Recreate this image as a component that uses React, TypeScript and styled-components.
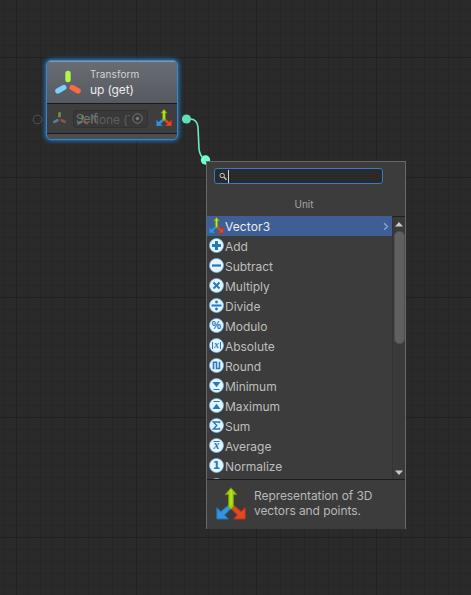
import React from "react";
import styled, { createGlobalStyle } from "styled-components";

const GlobalStyle = createGlobalStyle`
  * { box-sizing: border-box; }
  body { margin: 0; background: #2a2a2a; overflow: hidden; }
`;

const Canvas = styled.main`
  position: relative;
  width: 471px;
  height: 595px;
  overflow: hidden;
  font-family: Inter, "Liberation Sans", sans-serif;
  background-color: #2a2a2a;
  background-image:
    linear-gradient(90deg, #202020 1px, transparent 1px),
    linear-gradient(#202020 1px, transparent 1px),
    linear-gradient(90deg, #262626 1px, transparent 1px),
    linear-gradient(#262626 1px, transparent 1px);
  background-size: 120px 120px, 120px 120px, 12px 12px, 12px 12px;
  background-position: 16px 0, 0 57px, 4px 0, 0 9px;
`;

const Wires = styled.svg`
  position: absolute;
  left: 0;
  top: 0;
`;

const Node = styled.section`
  position: absolute;
  left: 46px;
  top: 60px;
  width: 132px;
  height: 80px;
  display: flex;
  flex-direction: column;
  border: 1.5px solid #3d83c8;
  border-radius: 5px;
  background: #4b4d4f;
  box-shadow: 0 0 4px 1px #2379c8;
  overflow: hidden;
`;

const NodeHeader = styled.header`
  height: 42px;
  flex: none;
  display: flex;
  align-items: center;
  gap: 7px;
  padding-left: 8px;
  border-top: 1px solid #92969b;
  background: linear-gradient(#686c73, #565a60);
`;

const NodeTitles = styled.div`
  display: flex;
  flex-direction: column;
  color: #ececec;
`;

const NodeType = styled.span`
  font-size: 10px;
  line-height: 14px;
  letter-spacing: 0.1px;
  color: #d4d4d4;
`;

const NodeName = styled.span`
  font-size: 12px;
  line-height: 18px;
  letter-spacing: -0.12px;
`;

const NodeBody = styled.div`
  height: 31px;
  flex: none;
  display: flex;
  align-items: center;
  padding: 0 5px 2px 6px;
  border-top: 1px solid #1b1b1b;
  border-bottom: 1px solid #1b1b1b;
  background: #3e3e3e;
`;

const Faded = styled.span`
  display: flex;
  flex: none;
  opacity: 0.45;
`;

const ObjectField = styled.div`
  position: relative;
  width: 75px;
  height: 18px;
  margin: 2px auto 0 6px;
  display: flex;
  align-items: center;
  justify-content: space-between;
  padding: 0 4px 0 3px;
  border: 1px solid #323232;
  border-radius: 3px;
  background: #393939;
  color: #5e5e5e;
  font-size: 12px;
`;

const FieldValue = styled.span`
  display: flex;
  align-items: center;
  gap: 1px;
  width: 53px;
  padding-top: 2px;
  overflow: hidden;
  white-space: nowrap;
  letter-spacing: -0.1px;
`;

const SelfLabel = styled.span`
  position: absolute;
  left: 2px;
  top: 0;
  font-size: 12px;
  line-height: 15px;
  letter-spacing: -0.1px;
  color: #777;
`;

const Menu = styled.section`
  position: absolute;
  left: 206px;
  top: 161px;
  width: 200px;
  height: 368px;
  display: flex;
  flex-direction: column;
  border: 1px solid #686868;
  border-bottom: 0;
  background: #3c3c3c;
  color: #c6c6c6;
`;

const MenuTop = styled.div`
  height: 54px;
  flex: none;
  padding: 6px 22px 0 7px;
`;

const Search = styled.div`
  width: 169px;
  height: 16px;
  display: flex;
  align-items: center;
  padding-left: 4px;
  border: 1px solid #387bc5;
  border-radius: 3px;
  background: #2a2a2a;
`;

const Caret = styled.i`
  width: 1px;
  height: 13px;
  background: #d8d8d8;
`;

const MenuTitle = styled.div`
  width: 180px;
  margin-top: 13px;
  text-align: center;
  font-size: 10px;
  line-height: 14px;
  color: #a5a5a5;
`;

const Scroller = styled.div`
  height: 263px;
  flex: none;
  display: flex;
  overflow: hidden;
`;

const List = styled.ul`
  width: 185px;
  margin: 0;
  padding: 0;
  list-style: none;
`;

const Row = styled.li<{ $selected?: boolean }>`
  height: 20px;
  display: flex;
  align-items: center;
  gap: 1px;
  padding: 1px 3px 0 2px;
  font-size: 12px;
  letter-spacing: ${(p) => (p.$selected ? "0.1px" : "-0.03px")};
  color: ${(p) => (p.$selected ? "#ececec" : "#bebebe")};
  background: ${(p) => (p.$selected ? "#3e5f96" : "transparent")};
  & > svg:first-child { flex: none; margin-top: -2px; }
`;

const RowLabel = styled.span`
  flex: 1;
`;

const Scrollbar = styled.div`
  width: 13px;
  display: flex;
  flex-direction: column;
  align-items: center;
  padding: 5px 0 4px;
  border-left: 1px solid #343434;
  border-top: 1px solid #202020;
  background: #3a3a3a;
`;

const Thumb = styled.div`
  width: 11px;
  height: 113px;
  margin-top: 4px;
  margin-bottom: auto;
  border: 1px solid #4e4e4e;
  border-radius: 5px;
  background: #606060;
`;

const Details = styled.footer`
  flex: 1;
  display: flex;
  align-items: flex-start;
  gap: 8px;
  padding: 7px 9px 0;
  border-top: 1px solid #1c1c1c;
  font-size: 12px;
  line-height: 15px;
  letter-spacing: -0.08px;
  white-space: pre-line;
  color: #b8b8b8;
`;

const DetailsText = styled.span`
  padding-top: 1px;
`;

const VectorIcon = ({ size, bold }: { size: number; bold?: boolean }) => {
  const outline = bold ? 1.4 : 1;
  return (
    <svg width={size} height={size * 1.1} viewBox="0 0 30 33">
      <path d="M12.600 18 15.600 21 8.600 28 12.400 32H.8V20.600l4 3.900Z" fill="#3295df" stroke="#2270b3" strokeWidth={outline} />
      <path d="M17.400 18 14.400 21 21.400 28 17.600 32h11.600V20.600l-4 3.900Z" fill="#e34824" stroke="#b8321a" strokeWidth={outline} />
      <path d="M15 .8 20.700 7.600h-3.200v12.200L15 22.300l-2.500-2.500V7.600H9.300Z" fill="#a2cf10" stroke="#759b00" strokeWidth={outline} />
      <path d="M15 3v15" stroke="#c3eb3d" strokeWidth={bold ? 2 : 1} />
    </svg>
  );
};

const TransformIcon = ({ size }: { size: number }) => (
  <svg width={size} height={size} viewBox="0 0 28 28" strokeLinecap="round" strokeWidth="5.4">
    <path d="M13 4.500v6" stroke="#b2f54b" />
    <path d="m8.800 18.500-5.900 3.400" stroke="#79cfff" />
    <path d="m17.200 18.500 5.900 3.400" stroke="#ff6a3d" />
  </svg>
);

const ink = "#2878ba";
const line = { fill: "none", stroke: ink, strokeWidth: 2 };
const glyphs: Record<string, React.ReactNode> = {
  Add: <path d="M7.5 3v9M3 7.5h9" {...line} strokeWidth={3} />,
  Subtract: <path d="M3 7.5h9" {...line} strokeWidth={2.2} />,
  Multiply: <path d="m4.5 4.5 6 6m0-6-6 6" {...line} />,
  Divide: <><path d="M2.5 7.5h10" {...line} /><circle cx="7.5" cy="4" r="1.4" fill={ink} /><circle cx="7.5" cy="11" r="1.4" fill={ink} /></>,
  Modulo: <text x="7.5" y="11.4" fontSize="10.5" fontWeight="700" fontFamily="Liberation Sans, sans-serif" textAnchor="middle" fill={ink}>%</text>,
  Absolute: <><path d="M3.5 4v7M11.5 4v7" {...line} strokeWidth={1} /><text x="7.5" y="10" fontFamily="Liberation Serif, serif" fontSize="10" fontWeight="700" fontStyle="italic" textAnchor="middle" fill={ink}>x</text></>,
  Round: <path d="M4.5 11.3V4.3h3v6.2h3V3.7" {...line} strokeWidth={1.6} />,
  Minimum: <><path d="M3.5 4h8l-4 5.3Z" fill={ink} /><path d="M4.5 11.5h6" {...line} strokeWidth={1} /></>,
  Maximum: <><path d="M3.5 11h8l-4-5.3Z" fill={ink} /><path d="M4.5 3.5h6" {...line} strokeWidth={1} /></>,
  Sum: <path d="M10.5 5.2V4h-6l3.2 3.5L4.5 11h6V9.8" {...line} strokeWidth={1.5} />,
  Average: <><path d="M4.5 3.5h6" {...line} strokeWidth={1} /><text x="7.5" y="11" fontFamily="Liberation Serif, serif" fontSize="12" fontWeight="700" fontStyle="italic" textAnchor="middle" fill={ink}>x</text></>,
  Normalize: <text x="7.4" y="11.3" fontFamily="DejaVu Sans, sans-serif" fontSize="10.5" fontWeight="700" textAnchor="middle" fill={ink}>1</text>,
};

const OperationIcon = ({ name }: { name: string }) => (
  <svg width="15" height="15" viewBox="0 0 15 15">
    <circle cx="7.5" cy="7.5" r="7" fill="#e4f5ff" stroke="#76bff0" strokeWidth="0.7" />
    {glyphs[name]}
  </svg>
);

export default function App() {
  return (
    <>
      <GlobalStyle />
      <Canvas>
        <Node>
          <NodeHeader>
            <TransformIcon size={28} />
            <NodeTitles>
              <NodeType>Transform</NodeType>
              <NodeName>up (get)</NodeName>
            </NodeTitles>
          </NodeHeader>
          <NodeBody>
            <Faded><TransformIcon size={14} /></Faded>
            <ObjectField>
              <FieldValue><Faded><TransformIcon size={12} /></Faded>None (T</FieldValue>
              <SelfLabel>Self</SelfLabel>
              <svg width="11" height="11" viewBox="0 0 11 11">
                <circle cx="5.5" cy="5.5" r="4.7" fill="none" stroke="#777" />
                <circle cx="5.5" cy="5.5" r="1.7" fill="#777" />
              </svg>
            </ObjectField>
            <VectorIcon size={16} bold />
          </NodeBody>
        </Node>
        <Wires width="471" height="595">
          <circle cx="37.5" cy="119.5" r="4.3" fill="none" stroke="#545454" />
          <path d="M187 119h3q7 0 8 8l1 22q1 8 6.500 11" fill="none" stroke="#6bedc4" strokeWidth="1.6" />
          <circle cx="186.5" cy="119" r="4.6" fill="#65dcb8" />
          <circle cx="205.5" cy="160" r="4.7" fill="#70ffd1" />
        </Wires>
        <Menu>
          <MenuTop>
            <Search>
              <svg width="9" height="9" viewBox="0 0 9 9" fill="none" stroke="#c6c6c6">
                <circle cx="3.2" cy="3.5" r="2.2" />
                <path d="m5 5.3 2.5 2.4" strokeWidth="1.4" />
              </svg>
              <Caret />
            </Search>
            <MenuTitle>Unit</MenuTitle>
          </MenuTop>
          <Scroller>
            <List>
              <Row $selected>
                <VectorIcon size={15} bold />
                <RowLabel>Vector3</RowLabel>
                <svg width="6" height="9" viewBox="0 0 6 9" fill="none" stroke="#8ba6d2" strokeWidth="1.3">
                  <path d="m1 1.2 3.5 3.3L1 7.8" />
                </svg>
              </Row>
              {Object.keys(glyphs).map((name) => (
                <Row key={name}>
                  <OperationIcon name={name} />
                  <RowLabel>{name}</RowLabel>
                </Row>
              ))}
              <Row><OperationIcon name="" /></Row>
            </List>
            <Scrollbar>
              <svg width="8" height="5" viewBox="0 0 8 5"><path d="M0 4.5 4 0l4 4.5Z" fill="#c9c9c9" /></svg>
              <Thumb />
              <svg width="8" height="5" viewBox="0 0 8 5"><path d="M0 .5h8L4 5Z" fill="#c9c9c9" /></svg>
            </Scrollbar>
          </Scroller>
          <Details>
            <VectorIcon size={30} />
            <DetailsText>{"Representation of 3D\nvectors and points."}</DetailsText>
          </Details>
        </Menu>
      </Canvas>
    </>
  );
}
